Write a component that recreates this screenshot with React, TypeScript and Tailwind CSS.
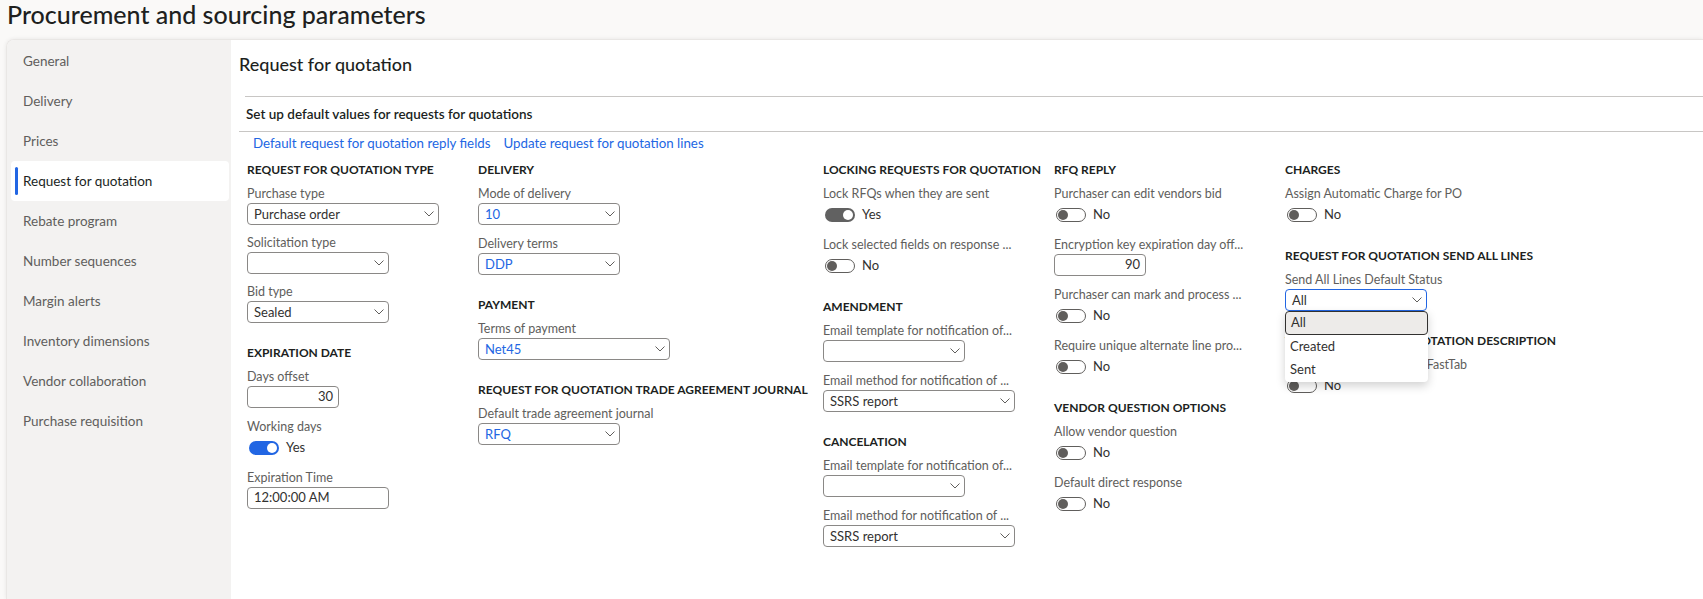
import React from "react";

const navItems = [
  "General",
  "Delivery",
  "Prices",
  "Request for quotation",
  "Rebate program",
  "Number sequences",
  "Margin alerts",
  "Inventory dimensions",
  "Vendor collaboration",
  "Purchase requisition",
];

function Chevron() {
  return (
    <svg width="10" height="6" viewBox="0 0 10 6" fill="none" className="shrink-0">
      <path d="M0.5 0.5L5 5L9.5 0.5" stroke="#605e5c" strokeWidth="1" />
    </svg>
  );
}

function Label({ children }: { children: React.ReactNode }) {
  return (
    <div className="h-[20px] leading-[22px] text-[12.5px] text-[#605e5c] whitespace-nowrap">
      {children}
    </div>
  );
}

function Section({
  title,
  children,
  className = "mb-[11px]",
}: {
  title: string;
  children: React.ReactNode;
  className?: string;
}) {
  return (
    <div className={`flex flex-col ${className}`}>
      <div className="h-[20px] leading-[21px] mb-[4px] text-[12px] font-bold text-[#201f1e] whitespace-nowrap">
        {title}
      </div>
      {children}
    </div>
  );
}

function Field({
  label,
  children,
  className = "mb-[8px]",
}: {
  label: string;
  children: React.ReactNode;
  className?: string;
}) {
  return (
    <div className={className}>
      <Label>{label}</Label>
      {children}
    </div>
  );
}

interface SelectProps {
  value?: string;
  wide?: boolean;
  blue?: boolean;
  focused?: boolean;
}

function Select({ value = "", wide, blue, focused }: SelectProps) {
  return (
    <div
      className={`${wide ? "w-[192px]" : "w-[142px]"} h-[22px] rounded-[4px] border flex items-center justify-between pl-[6px] pr-[4px] ${
        focused ? "border-[#2266e3]" : "border-[#8a8886]"
      }`}
    >
      <span className={`text-[13px] leading-[20px] ${blue ? "text-[#2266e3]" : "text-[#323130]"}`}>
        {value}
      </span>
      <Chevron />
    </div>
  );
}

function NumberBox({ value }: { value: string }) {
  return (
    <div className="w-[92px] h-[22px] rounded-[4px] border border-[#8a8886] flex items-center justify-end pr-[5px] text-[13px] text-[#323130]">
      {value}
    </div>
  );
}

function TextBox({ value }: { value: string }) {
  return (
    <div className="w-[142px] h-[22px] rounded-[4px] border border-[#8a8886] flex items-center pl-[6px] text-[13px] text-[#323130]">
      {value}
    </div>
  );
}

function Toggle({ on, tone = "blue" }: { on?: boolean; tone?: "blue" | "gray" }) {
  return (
    <div className="flex items-center h-[23px] gap-[7px] pl-[2px]">
      {on ? (
        <div
          className={`w-[30px] h-[14px] rounded-full flex items-center justify-end pr-[2px] ${
            tone === "blue" ? "bg-[#2266e3]" : "bg-[#616161]"
          }`}
        >
          <div className="w-[10px] h-[10px] rounded-full bg-white" />
        </div>
      ) : (
        <div className="w-[30px] h-[14px] rounded-full border border-[#605e5c] flex items-center pl-[1px]">
          <div className="w-[10px] h-[10px] rounded-full bg-[#605e5c]" />
        </div>
      )}
      <span className="text-[13px] text-[#323130]">{on ? "Yes" : "No"}</span>
    </div>
  );
}

function StatusDropdown() {
  const options = ["All", "Created", "Sent"];
  return (
    <div className="relative w-[142px]">
      <Select value="All" focused />
      <div className="absolute left-0 top-full w-[143px] bg-white rounded-b-[4px] shadow-[0_4px_10px_rgba(0,0,0,0.18)] z-10">
        {options.map((o, i) => (
          <div
            key={o}
            className={`h-[23.5px] flex items-center pl-[5px] text-[13px] text-[#323130] ${
              i === 0 ? "bg-[#edebe9] border border-[#323130] rounded-[4px]" : ""
            }`}
          >
            {o}
          </div>
        ))}
      </div>
    </div>
  );
}

export default function App() {
  return (
    <div className="w-[1703px] h-[599px] overflow-hidden bg-[#faf9f8] font-['Lato',sans-serif] text-[#323130]">
      <div className="h-[39px] pl-[7px] leading-[28px] text-[25px] font-medium text-[#201f1e] whitespace-nowrap">
        Procurement and sourcing parameters
      </div>

      <div className="ml-[6px] h-[560px] flex rounded-tl-[8px] overflow-hidden border-l border-t border-[#e9e7e5] shadow-[0_0_4px_rgba(0,0,0,0.08)]">
        {/* Side navigation */}
        <div className="w-[224px] shrink-0 bg-[#f3f2f1] pt-[1px] pl-[4px] pr-[2px]">
          {navItems.map((item) => {
            const selected = item === "Request for quotation";
            return (
              <div
                key={item}
                className={`relative h-[40px] rounded-[4px] flex items-center pl-[12px] text-[13.5px] ${
                  selected ? "bg-white text-[#201f1e]" : "text-[#605e5c]"
                }`}
              >
                {selected && (
                  <span className="absolute left-[4px] top-[6px] bottom-[6px] w-[3px] rounded-full bg-[#2266e3]" />
                )}
                {item}
              </div>
            );
          })}
        </div>

        {/* Content */}
        <div className="flex-1 bg-white">
          <div className="mt-[12px] pl-[8px] h-[24px] leading-[24px] text-[18px] font-medium text-[#201f1e]">
            Request for quotation
          </div>

          <div className="ml-[8px] mt-[20px]">
            <div className="ml-[6px] border-t border-[#c8c6c4]" />
            <div className="h-[35px] flex items-center pl-[7px] border-b border-[#c8c6c4] text-[13.5px] font-semibold text-[#201f1e]">
              Set up default values for requests for quotations
            </div>
            <div className="h-[24px] flex items-center gap-[13px] pl-[14px] text-[13.3px] text-[#2266e3]">
              <span>Default request for quotation reply fields</span>
              <span>Update request for quotation lines</span>
            </div>
          </div>

          <div className="flex pl-[16px] pt-[3px]">
            {/* Column 1 */}
            <div className="w-[231px] shrink-0 flex flex-col">
              <Section title="REQUEST FOR QUOTATION TYPE" className="mb-[12px]">
                <Field label="Purchase type" className="mb-[7px]">
                  <Select value="Purchase order" wide />
                </Field>
                <Field label="Solicitation type" className="mb-[7px]">
                  <Select />
                </Field>
                <Field label="Bid type" className="mb-[7px]">
                  <Select value="Sealed" />
                </Field>
              </Section>
              <Section title="EXPIRATION DATE">
                <Field label="Days offset">
                  <NumberBox value="30" />
                </Field>
                <Field label="Working days">
                  <Toggle on />
                </Field>
                <Field label="Expiration Time">
                  <TextBox value="12:00:00 AM" />
                </Field>
              </Section>
            </div>

            {/* Column 2 */}
            <div className="w-[345px] shrink-0 flex flex-col">
              <Section title="DELIVERY">
                <Field label="Mode of delivery">
                  <Select value="10" blue />
                </Field>
                <Field label="Delivery terms">
                  <Select value="DDP" blue />
                </Field>
              </Section>
              <Section title="PAYMENT">
                <Field label="Terms of payment">
                  <Select value="Net45" blue wide />
                </Field>
              </Section>
              <Section title="REQUEST FOR QUOTATION TRADE AGREEMENT JOURNAL">
                <Field label="Default trade agreement journal">
                  <Select value="RFQ" blue />
                </Field>
              </Section>
            </div>

            {/* Column 3 */}
            <div className="w-[231px] shrink-0 flex flex-col">
              <Section title="LOCKING REQUESTS FOR QUOTATION">
                <Field label="Lock RFQs when they are sent">
                  <Toggle on tone="gray" />
                </Field>
                <Field label="Lock selected fields on response ...">
                  <Toggle />
                </Field>
              </Section>
              <Section title="AMENDMENT">
                <Field label="Email template for notification of...">
                  <Select />
                </Field>
                <Field label="Email method for notification of ...">
                  <Select value="SSRS report" wide />
                </Field>
              </Section>
              <Section title="CANCELATION">
                <Field label="Email template for notification of...">
                  <Select />
                </Field>
                <Field label="Email method for notification of ...">
                  <Select value="SSRS report" wide />
                </Field>
              </Section>
            </div>

            {/* Column 4 */}
            <div className="w-[231px] shrink-0 flex flex-col">
              <Section title="RFQ REPLY">
                <Field label="Purchaser can edit vendors bid">
                  <Toggle />
                </Field>
                <Field label="Encryption key expiration day off...">
                  <NumberBox value="90" />
                </Field>
                <Field label="Purchaser can mark and process ...">
                  <Toggle />
                </Field>
                <Field label="Require unique alternate line pro...">
                  <Toggle />
                </Field>
              </Section>
              <Section title="VENDOR QUESTION OPTIONS">
                <Field label="Allow vendor question">
                  <Toggle />
                </Field>
                <Field label="Default direct response">
                  <Toggle />
                </Field>
              </Section>
            </div>

            {/* Column 5 */}
            <div className="w-[280px] shrink-0 flex flex-col">
              <Section title="CHARGES">
                <Field label="Assign Automatic Charge for PO">
                  <Toggle />
                </Field>
              </Section>
              <Section title="REQUEST FOR QUOTATION SEND ALL LINES">
                <Field label="Send All Lines Default Status">
                  <StatusDropdown />
                </Field>
              </Section>
              <Section title="VIEW REQUEST FOR QUOTATION DESCRIPTION">
                <Field label="Show descriptions on the FastTab">
                  <Toggle />
                </Field>
              </Section>
            </div>
          </div>
        </div>
      </div>
    </div>
  );
}
